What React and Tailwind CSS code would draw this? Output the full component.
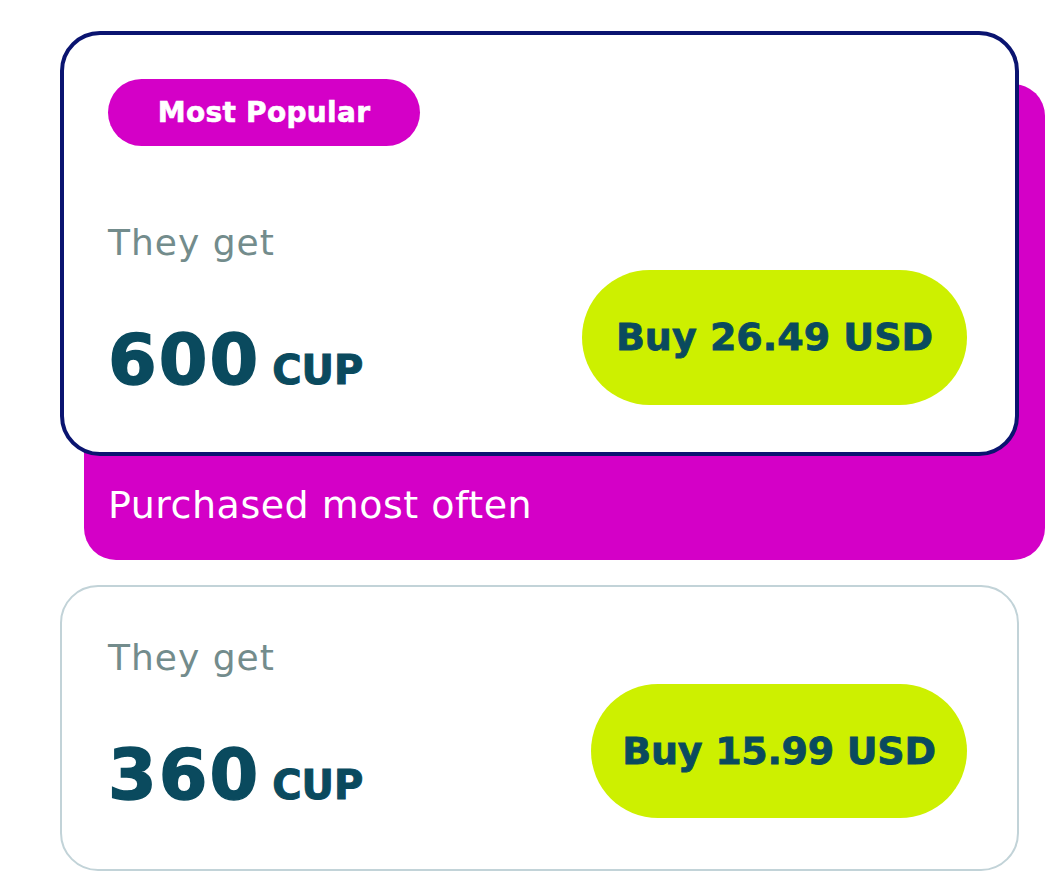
export default function App() {
    return (
        <div className="min-h-screen bg-white pl-[60px] pt-[31px] font-['DejaVu_Sans',sans-serif]">
            {/* popular pack: magenta sheet sits behind the white card */}
            <div className="ml-[24px] mt-[53px] flex w-[961px] flex-col rounded-[32px] bg-[#d400c7]">
                <div className="-ml-[24px] -mt-[53px] flex h-[425px] w-[959px] flex-col justify-between rounded-[40px] border-4 border-[#0a1470] bg-white pb-[47px] pl-[44px] pr-[48px] pt-[44px]">
                    <span className="flex h-[67px] w-[312px] items-center justify-center rounded-full bg-[#d400c7] text-[28px] font-bold tracking-[0.3px] text-white [-webkit-text-stroke:0.6px_white]">
                        Most Popular
                    </span>
                    <div className="flex items-end justify-between">
                        <div className="flex flex-col pb-[10px]">
                            <span className="text-[36px] leading-none tracking-[1px] text-[#738c8c]">They get</span>
                            <div className="mt-[64px] flex items-baseline gap-[12px] text-[#0a4a5e]">
                                <span className="text-[70px] font-bold leading-none tracking-[2px] [-webkit-text-stroke:1.5px_#0a4a5e]">600</span>
                                <span className="text-[40px] font-bold leading-none [-webkit-text-stroke:1px_#0a4a5e]">CUP</span>
                            </div>
                        </div>
                        <button className="flex h-[135px] w-[385px] items-center justify-center rounded-full bg-[#cdf000] text-[38px] font-bold text-[#0a4a5e] [-webkit-text-stroke:0.8px_#0a4a5e]">
                            Buy 26.49 USD
                        </button>
                    </div>
                </div>
                <div className="pb-[36px] pl-[24px] pt-[30px] text-[38px] leading-none tracking-[0.5px] text-white">
                    Purchased most often
                </div>
            </div>

            <div className="mt-[25px] flex h-[286px] w-[959px] items-end justify-between rounded-[38px] border-2 border-[#c2d3d8] bg-white pb-[51px] pl-[46px] pr-[50px]">
                <div className="flex flex-col pb-[8px]">
                    <span className="text-[36px] leading-none tracking-[1px] text-[#738c8c]">They get</span>
                    <div className="mt-[64px] flex items-baseline gap-[12px] text-[#0a4a5e]">
                        <span className="text-[70px] font-bold leading-none tracking-[2px] [-webkit-text-stroke:1.5px_#0a4a5e]">360</span>
                        <span className="text-[40px] font-bold leading-none [-webkit-text-stroke:1px_#0a4a5e]">CUP</span>
                    </div>
                </div>
                <button className="flex h-[134px] w-[376px] items-center justify-center rounded-full bg-[#cdf000] text-[38px] font-bold tracking-[-0.3px] text-[#0a4a5e] [-webkit-text-stroke:0.8px_#0a4a5e]">
                    Buy 15.99 USD
                </button>
            </div>
        </div>
    );
}
